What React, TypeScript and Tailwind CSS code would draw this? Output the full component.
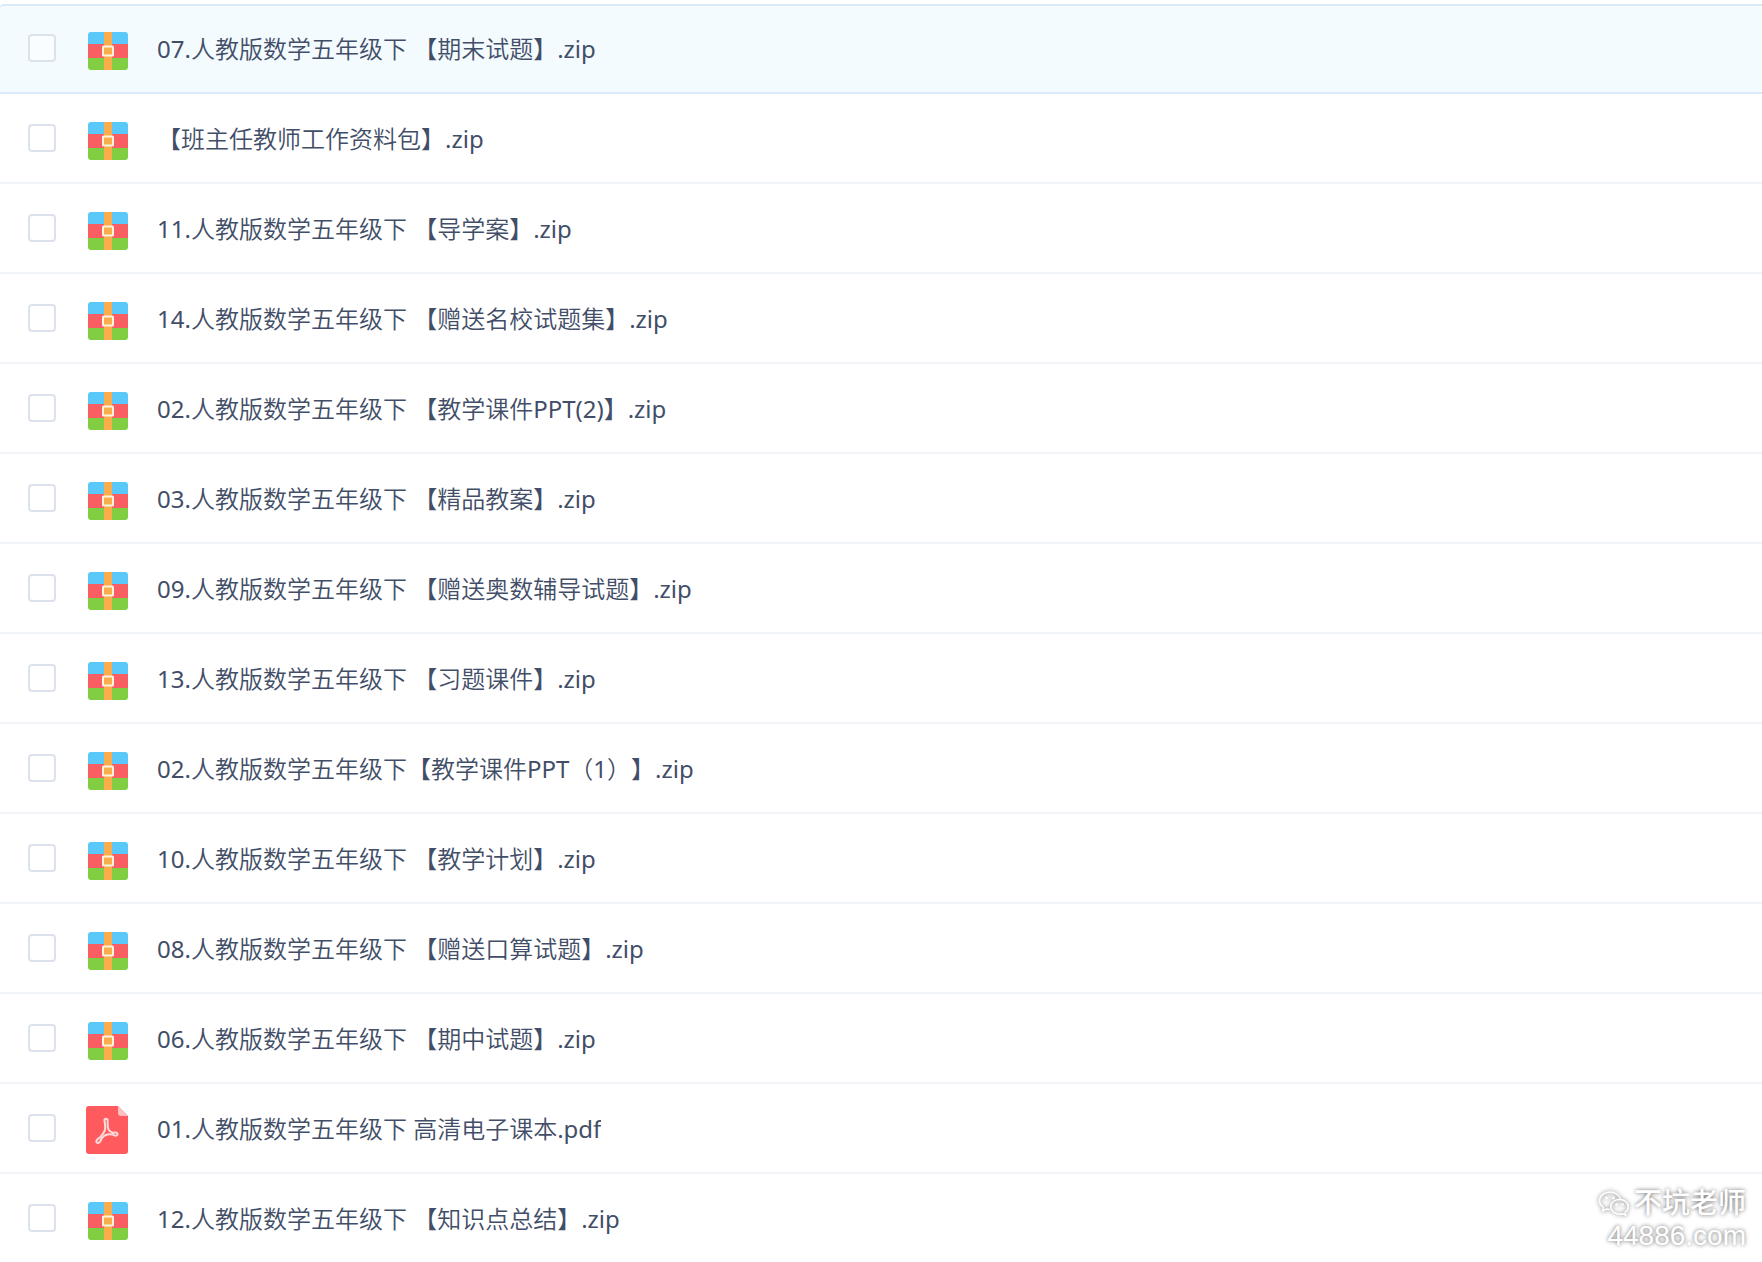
type FileKind = "zip" | "pdf";

interface FileItem {
  name: string;
  kind: FileKind;
  active?: boolean;
}

const files: FileItem[] = [
  { name: "07.人教版数学五年级下 【期末试题】.zip", kind: "zip", active: true },
  { name: "【班主任教师工作资料包】.zip", kind: "zip" },
  { name: "11.人教版数学五年级下 【导学案】.zip", kind: "zip" },
  { name: "14.人教版数学五年级下 【赠送名校试题集】.zip", kind: "zip" },
  { name: "02.人教版数学五年级下 【教学课件PPT(2)】.zip", kind: "zip" },
  { name: "03.人教版数学五年级下 【精品教案】.zip", kind: "zip" },
  { name: "09.人教版数学五年级下 【赠送奥数辅导试题】.zip", kind: "zip" },
  { name: "13.人教版数学五年级下 【习题课件】.zip", kind: "zip" },
  { name: "02.人教版数学五年级下【教学课件PPT（1）】.zip", kind: "zip" },
  { name: "10.人教版数学五年级下 【教学计划】.zip", kind: "zip" },
  { name: "08.人教版数学五年级下 【赠送口算试题】.zip", kind: "zip" },
  { name: "06.人教版数学五年级下 【期中试题】.zip", kind: "zip" },
  { name: "01.人教版数学五年级下 高清电子课本.pdf", kind: "pdf" },
  { name: "12.人教版数学五年级下 【知识点总结】.zip", kind: "zip" },
];

function ZipIcon() {
  return (
    <svg viewBox="0 0 48 48" className="mt-1 size-12 shrink-0" aria-hidden="true">
      <path d="M4 18V9a3 3 0 0 1 3-3h34a3 3 0 0 1 3 3v9z" fill="#5ac8f8" />
      <path d="M4 18h40v14H4z" fill="#f95f62" />
      <path d="M4 32h40v9a3 3 0 0 1-3 3H7a3 3 0 0 1-3-3z" fill="#82ce43" />
      <path d="M20 6h8v38h-8z" fill="#fbad4b" />
      <rect x="19" y="20.5" width="10" height="9" rx="0.5" fill="#fbad4b" stroke="#fff3e2" strokeWidth="2" />
    </svg>
  );
}

function PdfIcon() {
  return (
    <svg viewBox="0 0 48 48" className="mt-1 size-12 shrink-0" aria-hidden="true">
      <path d="M5 0h29l10 10v35a3 3 0 0 1-3 3H5a3 3 0 0 1-3-3V3a3 3 0 0 1 3-3z" fill="#ff5b5e" />
      <path d="M34 0l10 10h-7a3 3 0 0 1-3-3z" fill="#ffc0c1" />
      <g fill="none" stroke="#ffdcdc" strokeWidth="2" strokeLinecap="round" strokeLinejoin="round">
        <path d="M20.400 14.500a1.600 1.800 0 0 1 3.200 0c0 3.500-.2 6.500.8 9 1.200 1.800 2.600 2.800 4.400 3.200 2.200-.5 4.400-.4 4.700 1.300.3 2-2.600 2.500-4.700.6-2.800-.9-5.400-.5-8 .9-1.500.9-2.700 2.200-3.600 3.700-.7 2.600-2.500 4.500-4.100 3.500-1.800-1.200-.1-3.700 2.700-5.100 2.400-2.300 4.300-4.800 5.100-7.500.8-3 .2-6-.5-9.600z" />
      </g>
    </svg>
  );
}

function WeChatIcon() {
  return (
    <svg viewBox="0 0 32 28" className="h-7 w-8 drop-shadow-[0_0_2px_rgba(0,0,0,0.6)]" fill="none" stroke="#fff" strokeWidth="1.5" strokeLinejoin="round" aria-hidden="true">
      <path d="M12 19.500c-1.300 0-2.500-.2-3.600-.5L4.500 21l1-3.500C3 15.800 1.500 13.400 1.500 10.800 1.500 5.900 6.200 2 12 2c5 0 9.300 3 10.300 7" />
      <path d="M21.500 9.500c5 0 8.700 3.200 8.700 7.200 0 2.300-1.200 4.300-3.100 5.600l.8 2.900-3.200-1.500c-1 .3-2.100.5-3.200.5-4.900 0-8.700-3.300-8.700-7.500s3.800-7.200 8.700-7.200z" />
      <g fill="#fff" stroke="none">
        <circle cx="8.500" cy="8" r="1.400" />
        <circle cx="15.500" cy="8" r="1.400" />
        <circle cx="18.500" cy="14.500" r="1.200" />
        <circle cx="24.500" cy="14.500" r="1.200" />
      </g>
    </svg>
  );
}

function FileRow({ file, index }: { file: FileItem; index: number }) {
  const id = `file-${index}`;
  return (
    <li
      className={
        file.active
          ? "flex h-[90px] items-center rounded-tl-sm border-b-2 border-[#dbeafb] bg-[#f3fbff] pl-7 shadow-[inset_0_2px_0_#dbeafb]"
          : "flex h-[90px] items-center border-b-2 border-[#f1f5fa] pl-7 last:h-[88px] last:border-b-0"
      }
    >
      <input
        id={id}
        type="checkbox"
        className="size-7 shrink-0 appearance-none rounded border-2 border-[#dce2eb] bg-white/50 checked:border-sky-500 checked:bg-sky-500"
      />
      <label htmlFor={id} className="ml-7 flex min-w-0 items-center gap-[25px]">
        {file.kind === "zip" ? <ZipIcon /> : <PdfIcon />}
        <span className="mt-0.5 truncate text-2xl text-[#424e67] [text-spacing-trim:space-all]">{file.name}</span>
      </label>
    </li>
  );
}

export default function App() {
  return (
    <main
      lang="zh-CN"
      className="relative bg-white pt-1 font-['Noto_Sans','Noto_Sans_CJK_SC_DemiLight','Noto_Sans_CJK_SC_Light','Noto_Sans_CJK_SC',sans-serif]"
    >
      <ul>
        {files.map((file, index) => (
          <FileRow key={file.name} file={file} index={index} />
        ))}
      </ul>
      <div className="absolute right-4 bottom-2.5 flex flex-col items-end font-['Liberation_Sans','Noto_Sans_CJK_SC',sans-serif] text-[28px] leading-8 text-white [text-shadow:0_0_4px_rgba(0,0,0,0.6)]">
        <div className="flex items-center gap-1">
          <WeChatIcon />
          <span className="font-medium">不坑老师</span>
        </div>
        <span>44886.com</span>
      </div>
    </main>
  );
}
